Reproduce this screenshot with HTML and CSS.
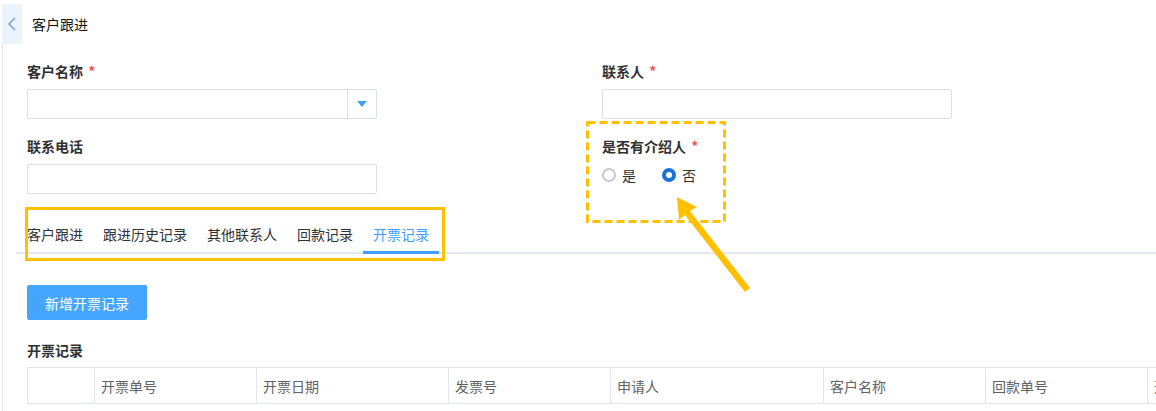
FILE: index.html
```html
<!DOCTYPE html>
<html lang="zh-CN">
<head>
<meta charset="utf-8">
<title>客户跟进</title>
<link rel="stylesheet" href="styles.css">
</head>
<body>
<div class="page">
  <header class="topbar">
    <button class="back" type="button" aria-label="返回">
      <svg width="20" height="40" viewBox="0 0 20 40"><path d="M13 14 L7 20 L13 26" fill="none" stroke="#6e9fd6" stroke-width="1.4"/></svg>
    </button>
    <span class="title">客户跟进</span>
  </header>

  <main class="main">
    <form class="form-grid">
      <div class="field">
        <label class="label">客户名称 <span class="req">*</span></label>
        <div class="select">
          <div class="select-input"></div>
          <div class="select-arrow"><span class="tri"></span></div>
        </div>
      </div>
      <div class="field">
        <label class="label">联系人 <span class="req">*</span></label>
        <div class="input"></div>
      </div>
      <div class="field">
        <label class="label">联系电话</label>
        <div class="input"></div>
      </div>
      <div class="field">
        <label class="label">是否有介绍人 <span class="req">*</span></label>
        <div class="radios">
          <span class="radio"><span class="dot"></span>是</span>
          <span class="radio checked"><span class="dot"></span>否</span>
        </div>
      </div>
    </form>

    <nav class="tabs">
      <span class="tab">客户跟进</span>
      <span class="tab">跟进历史记录</span>
      <span class="tab">其他联系人</span>
      <span class="tab">回款记录</span>
      <span class="tab active">开票记录</span>
    </nav>

    <section class="content">
      <button class="primary" type="button">新增开票记录</button>
      <h3 class="section-title">开票记录</h3>
      <table class="table">
        <colgroup>
          <col class="c1"><col class="c2"><col class="c3"><col class="c4"><col class="c5"><col class="c6"><col class="c7"><col class="c8">
        </colgroup>
        <thead>
          <tr>
            <th></th>
            <th>开票单号</th>
            <th>开票日期</th>
            <th>发票号</th>
            <th>申请人</th>
            <th>客户名称</th>
            <th>回款单号</th>
            <th>开票金额</th>
          </tr>
        </thead>
      </table>
    </section>
  </main>

  <div class="note-tabs"></div>
  <svg class="note-dash" width="143" height="105" viewBox="0 0 143 105">
    <rect x="1.5" y="1.5" width="137" height="99" fill="none" stroke="#ffc000" stroke-width="3" stroke-dasharray="8 4"/>
  </svg>
  <svg class="note-arrow" width="90" height="110" viewBox="0 0 90 110">
    <path d="M7 7 L27 17 L20 21 L80 98 L75 102 L15 25 L9 30 Z" fill="#ffc000"/>
  </svg>
</div>
</body>
</html>
```

FILE: styles.css
```css
* { box-sizing: border-box; }

html, body {
  margin: 0;
  padding: 0;
  background: #fff;
}

body {
  font-family: "Noto Sans CJK SC", "Noto Sans", "Liberation Sans", sans-serif;
  font-size: 14px;
  color: #303133;
  overflow: hidden;
}

.page {
  position: relative;
  width: 1156px;
  height: 411px;
  overflow: hidden;
}

.topbar {
  display: flex;
  align-items: center;
  gap: 10px;
  padding: 4px 0 0 2px;
  height: 44px;
}

.back {
  width: 20px;
  height: 40px;
  padding: 0;
  border: 0;
  border-radius: 2px;
  background: #ebf4fe;
  display: flex;
}

.title {
  font-size: 14px;
  color: #111;
  line-height: 20px;
}

.main {
  margin-left: 2px;
  border-left: 1px solid #e6e8ec;
  padding-left: 24px;
  height: 367px;
}

.form-grid {
  display: grid;
  grid-template-columns: 350px 350px;
  column-gap: 225px;
  row-gap: 17px;
  padding-top: 17px;
  margin: 0;
}

.field {
  display: flex;
  flex-direction: column;
}

.label {
  display: block;
  height: 20px;
  font-weight: 700;
  font-size: 14px;
  line-height: 20px;
  color: #303133;
  margin-bottom: 8px;
  white-space: pre;
}

.req {
  color: #f0545b;
  font-weight: 700;
  margin-left: 2px;
}

.input,
.select {
  height: 30px;
  border: 1px solid #dcdfe6;
  border-radius: 2px;
  background: #fff;
}

.select {
  display: flex;
}

.select-input {
  flex: 1;
}

.select-arrow {
  width: 29px;
  border-left: 1px solid #dcdfe6;
  display: flex;
  align-items: center;
  justify-content: center;
}

.tri {
  width: 0;
  height: 0;
  border-left: 5px solid transparent;
  border-right: 5px solid transparent;
  border-top: 6px solid #409eff;
}

.radios {
  display: flex;
  align-items: center;
  gap: 26px;
  height: 22px;
}

.radio {
  display: flex;
  align-items: center;
  gap: 6px;
  font-size: 14px;
  color: #303133;
  line-height: 20px;
}

.dot {
  width: 14px;
  height: 14px;
  border-radius: 50%;
  border: 2px solid #c6c9cf;
  background: #fff;
}

.radio.checked .dot {
  border: 4px solid #1a73d9;
}

.tabs {
  display: flex;
  margin: 18px 0 0 -11px;
  padding-left: 1px;
  border-bottom: 2px solid #e4e7ed;
}

.tab {
  position: relative;
  padding: 4px 10px 0;
  height: 40px;
  line-height: 36px;
  font-size: 14px;
  color: #303133;
}

.tab.active {
  color: #409eff;
}

.tab.active::after {
  content: "";
  position: absolute;
  left: 0;
  right: 0;
  bottom: -2px;
  height: 3px;
  background: #409eff;
}

.content {
  padding-top: 31px;
}

.primary {
  display: block;
  height: 35px;
  width: 120px;
  padding: 0;
  border: 0;
  border-radius: 2px;
  background: #46a6ff;
  color: #fff;
  font-family: inherit;
  font-size: 14px;
}

.section-title {
  margin: 20px 0 7px;
  font-size: 14px;
  line-height: 20px;
  font-weight: 700;
  color: #303133;
}

.table {
  border-collapse: collapse;
  table-layout: fixed;
  width: 1300px;
}

.c1 { width: 67px; }
.c2 { width: 162px; }
.c3 { width: 192px; }
.c4 { width: 162px; }
.c5 { width: 213px; }
.c6 { width: 162px; }
.c7 { width: 162px; }
.c8 { width: 180px; }

.table th {
  height: 36px;
  border: 1px solid #e1e4ea;
  text-align: left;
  font-weight: 400;
  font-size: 14px;
  color: #606266;
  padding: 0 6px;
  white-space: nowrap;
}

.note-tabs {
  position: absolute;
  left: 25px;
  top: 207px;
  width: 420px;
  height: 54px;
  border: 3px solid #ffc000;
}

.note-dash {
  position: absolute;
  left: 586px;
  top: 121px;
}

.note-arrow {
  position: absolute;
  left: 670px;
  top: 190px;
}
```
